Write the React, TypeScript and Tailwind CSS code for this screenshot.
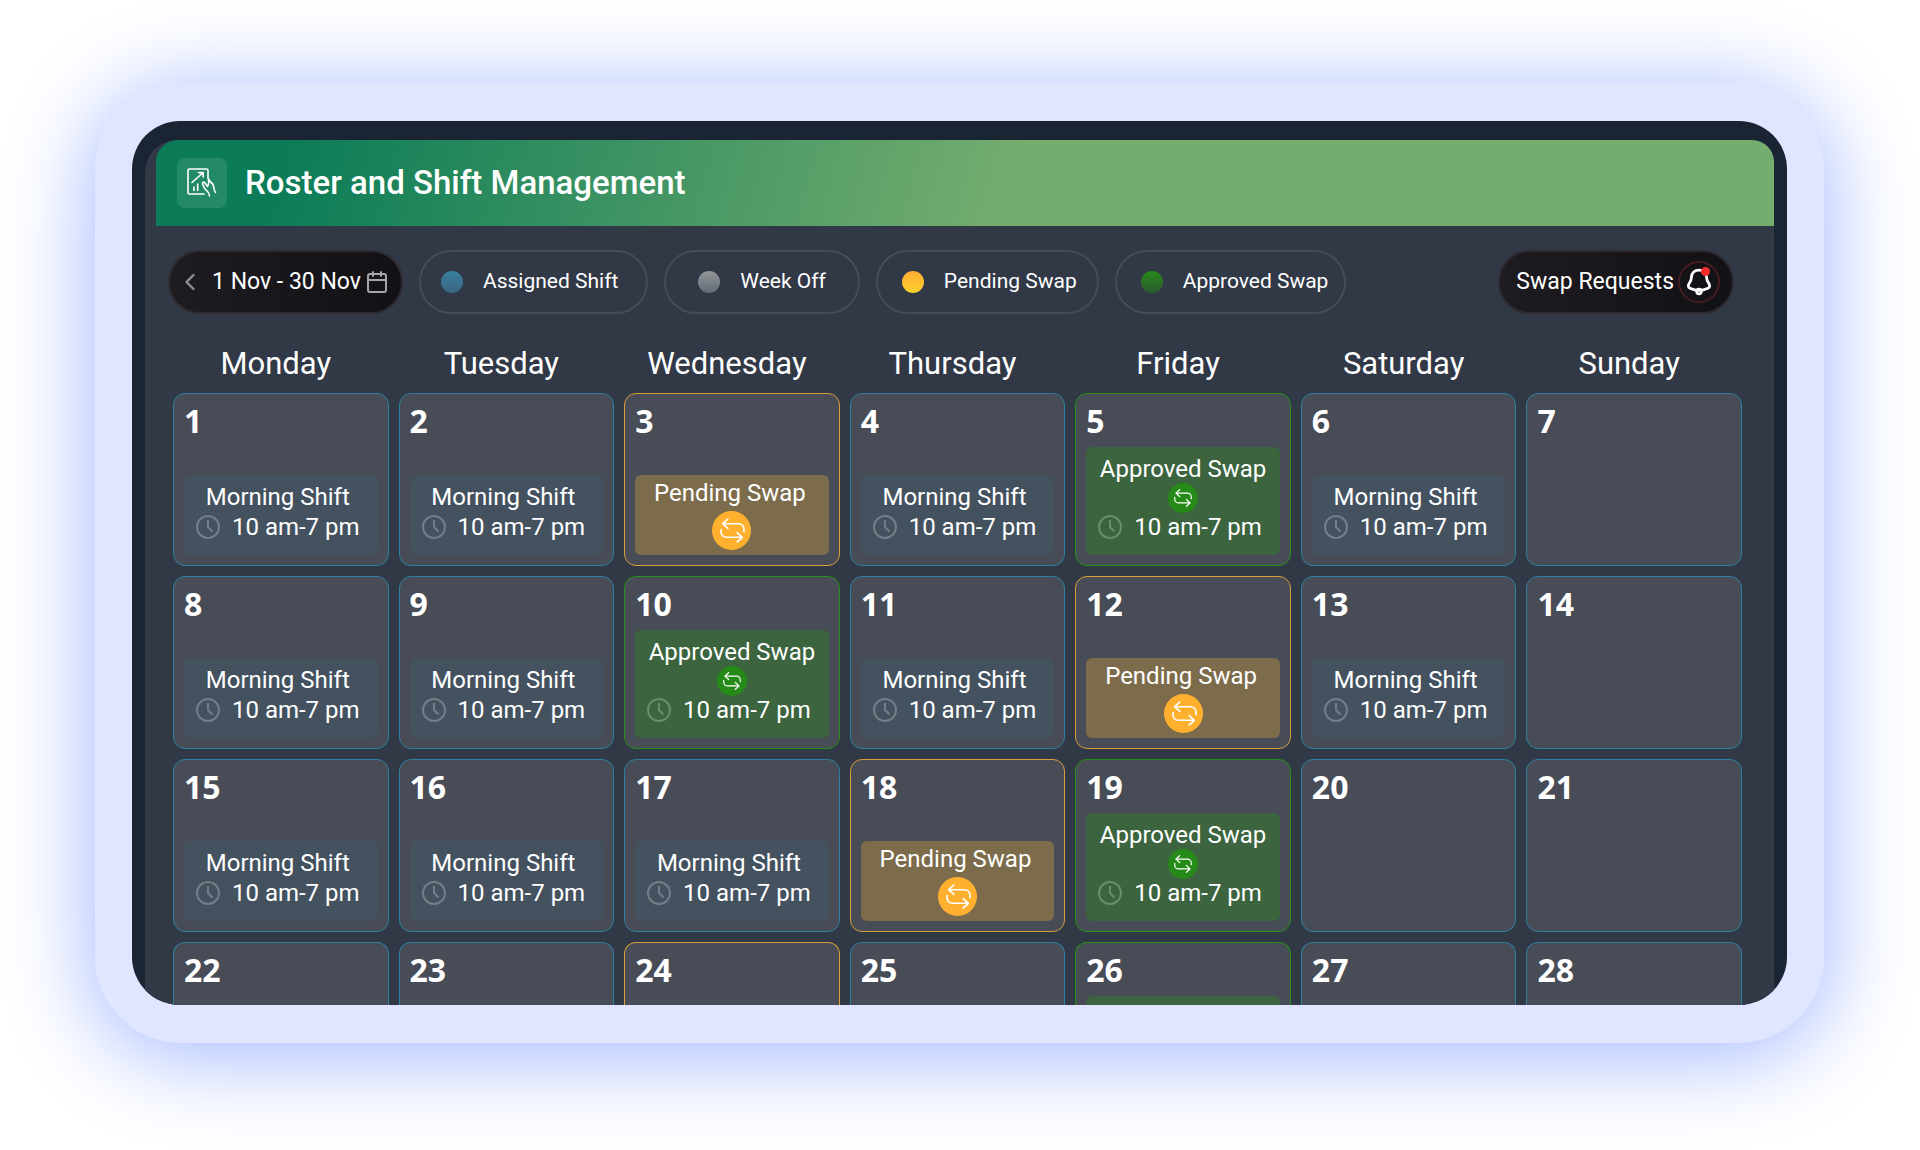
import React from "react";
import { Calendar, ChevronLeft } from "lucide-react";

type Kind = "morning" | "pending" | "approved" | "empty";

const DAYS = [
  "Monday",
  "Tuesday",
  "Wednesday",
  "Thursday",
  "Friday",
  "Saturday",
  "Sunday",
];

const WEEKS: Kind[][] = [
  ["morning", "morning", "pending", "morning", "approved", "morning", "empty"],
  ["morning", "morning", "approved", "morning", "pending", "morning", "empty"],
  ["morning", "morning", "morning", "pending", "approved", "empty", "empty"],
];

// Last visible week, cut by the bottom of the screen
const LAST_WEEK: Kind[] = ["empty", "empty", "pending", "empty", "approved", "empty", "empty"];

const LEGEND = [
  { label: "Assigned Shift", dot: "from-[#38809f] to-[#3a6581]", pad: "pl-5 pr-7" },
  { label: "Week Off", dot: "from-[#939699] to-[#626b77]", pad: "pl-8 pr-8" },
  { label: "Pending Swap", dot: "from-[#ffad33] to-[#fbd02c]", pad: "pl-6 pr-5" },
  { label: "Approved Swap", dot: "from-[#278b18] to-[#2a5a2e]", pad: "pl-6 pr-4" },
];

const BORDERS: Record<Kind, string> = {
  morning: "border-[#2f7fa2]",
  empty: "border-[#2f7fa2]",
  pending: "border-[#d99f3a]",
  approved: "border-[#259015]",
};

function SwapIcon({ className }: { className: string }) {
  return (
    <svg viewBox="0 0 24 24" className={className} fill="none" stroke="white" strokeWidth="1.6" strokeLinecap="round" strokeLinejoin="round">
      <path d="M7.5 1 2.5 5.5l5 4.5M2.5 5.5H18a5 5 0 0 1 5 5V13" />
      <path d="M1 11v2.5a5 5 0 0 0 5 5h15.5M16.5 14l5 4.5-5 4.5" />
    </svg>
  );
}

function RosterIcon() {
  return (
    <svg viewBox="0 0 30 30" className="size-[30px]" fill="none" stroke="white" strokeWidth="1.6" strokeLinecap="round" strokeLinejoin="round">
      <path d="M21 10V2.5A1.5 1.5 0 0 0 19.5 1h-17A1.5 1.5 0 0 0 1 2.5v22A1.5 1.5 0 0 0 2.5 26H17" />
      <path d="M5 14.5 15.7 5M11.5 4.6h4.7V9" />
      <path d="M7 19v3.5M10.7 16v6.5" />
      <path d="M21 10.5c1.5 1 1.5 2.5 2.5 3.5 2 1.2 3 2.5 3.2 5 .2 2.5.3 3.5 1.8 5.5" />
      <path d="M22.5 28c0-2-.5-3-2-4.500-2.500-2-4-4.500-5-7.500-.5-2 1.500-2.500 2.500-1l2.500 3.500c1.200-1.500 1.500-3.500 1-6" />
    </svg>
  );
}

function BellIcon() {
  return (
    <svg viewBox="0 0 26 28" className="h-[28px] w-[26px]" fill="none" stroke="white" strokeWidth="2.8" strokeLinecap="round" strokeLinejoin="round">
      <path d="M13 2.2C8.5 2.2 5.8 5 5.5 9c-.2 3-.5 4-2 5.800C1.500 17.300 2 19.500 4.500 20.500c5 2.300 12 2.300 17 0 2.500-1 3-3.200 1-5.700-1.500-1.800-1.800-2.800-2-5.800C20.200 5 17.500 2.200 13 2.200Z" />
      <circle cx="13" cy="23.5" r="2.3" />
    </svg>
  );
}

function ShiftTime() {
  return (
    <div className="flex items-center justify-center gap-3 pr-1.5">
      <svg viewBox="0 0 24 24" className="size-6 stroke-white/25" fill="none" strokeWidth="2">
        <circle cx="12" cy="12" r="11" />
        <path d="M12 5v7l4.5 4.5" />
      </svg>
      <span>10 am-7 pm</span>
    </div>
  );
}

function ShiftBlock({ kind }: { kind: Kind }) {
  if (kind === "morning") {
    return (
      <div className="h-20 rounded-md bg-[#44525f] pt-[7px]">
        <div className="pr-1.5">Morning Shift</div>
        <ShiftTime />
      </div>
    );
  }
  if (kind === "pending") {
    return (
      <div className="flex h-20 flex-col items-center rounded-md bg-[#7d6c4b] pt-[3px]">
        <div className="pr-1">Pending Swap</div>
        <div className="mt-[3px] flex size-[39px] items-center justify-center rounded-full bg-[#ffb02f] pl-0.5">
          <SwapIcon className="size-[25px]" />
        </div>
      </div>
    );
  }
  if (kind === "approved") {
    return (
      <div className="flex h-[108px] flex-col items-center rounded-md bg-[#3b643f] pt-[7px]">
        <div>Approved Swap</div>
        <div className="-my-px flex size-[30px] items-center justify-center rounded-full bg-[#268a18]">
          <SwapIcon className="size-[18px]" />
        </div>
        <ShiftTime />
      </div>
    );
  }
  return null;
}

function DayNumber({ day }: { day: number }) {
  return (
    <div className="h-0 text-left font-['Open_Sans',sans-serif] text-[32px] leading-10 font-bold">
      {day}
    </div>
  );
}

export default function App() {
  return (
    <div className="min-h-screen bg-white pt-[83px] pr-24 pb-[107px] pl-[95px] font-[Roboto,sans-serif] text-white">
      <div className="rounded-[86px] bg-[#e0e6ff] px-[37px] py-[38px] shadow-[0_10px_90px_2px_#a0b6ff]">
        <div className="overflow-hidden rounded-[48px] bg-[#1b2433] pt-[19px] pr-[13px] pl-[13px]">
          <main className="rounded-tl-[32px] rounded-tr-[22px] bg-[#313846] pl-[11px]">
            {/* Header */}
            <header className="flex h-[86px] items-center gap-[18px] rounded-t-[22px] bg-[linear-gradient(105deg,#0b7c57_8%,#75ad6f_53%)] pl-[21px]">
              <div className="flex size-[50px] items-center justify-center rounded-lg bg-white/10">
                <RosterIcon />
              </div>
              <h1 className="text-[33px] font-medium">Roster and Shift Management</h1>
            </header>

            {/* Filters */}
            <div className="flex items-center gap-4 pt-6 pr-10 pl-3">
              <button className="flex h-16 items-center rounded-full border-2 border-[#2e2a30] bg-linear-to-r from-[#1e1c20] to-[#121116] pr-3 pl-1.5 text-[23px]">
                <ChevronLeft className="size-7 text-[#8b9196]" strokeWidth={2} />
                <span className="mr-1 ml-2">1 Nov - 30 Nov</span>
                <Calendar className="size-6 text-[#a3a7aa]" strokeWidth={2} />
              </button>
              {LEGEND.map((item) => (
                <button
                  key={item.label}
                  className={`flex h-16 items-center gap-5 rounded-full border-2 border-[#464c59] text-[21px] ${item.pad}`}
                >
                  <span className={`size-[22px] rounded-full bg-linear-to-b ${item.dot}`} />
                  {item.label}
                </button>
              ))}
              <button className="ml-auto flex h-16 items-center gap-1 rounded-full border-2 border-[#2e2a30] bg-linear-to-r from-[#1e1c20] to-[#121116] pr-3 pl-4 text-[23px]">
                Swap Requests
                <span className="relative flex size-[42px] items-center justify-center rounded-full border-2 border-[#471c20]">
                  <BellIcon />
                  <span className="absolute top-1 right-2 size-[9px] rounded-full bg-[#fb2b2f]" />
                </span>
              </button>
            </div>

            {/* Calendar */}
            <table className="block pt-[30px] pr-8 pl-[17px] text-center">
              <thead className="block">
                <tr className="grid grid-cols-7 gap-[10px] pb-[9px]">
                  {DAYS.map((day) => (
                    <th key={day} scope="col" className="pr-2.5 text-[31px] leading-10 font-normal">
                      {day}
                    </th>
                  ))}
                </tr>
              </thead>
              <tbody className="block">
                {WEEKS.map((week, w) => (
                  <tr key={w} className="mb-[10px] grid grid-cols-7 gap-[10px]">
                    {week.map((kind, d) => (
                      <td
                        key={d}
                        className={`flex h-[173px] flex-col justify-between rounded-xl border bg-[#474c57] px-[10px] pt-[7px] pb-[10px] text-2xl leading-[30px] ${BORDERS[kind]}`}
                      >
                        <DayNumber day={w * 7 + d + 1} />
                        <ShiftBlock kind={kind} />
                      </td>
                    ))}
                  </tr>
                ))}
                <tr className="grid grid-cols-7 gap-[10px]">
                  {LAST_WEEK.map((kind, d) => (
                    <td
                      key={d}
                      className={`flex h-[63px] flex-col justify-between rounded-t-xl border border-b-0 bg-[#474c57] px-[10px] pt-[7px] ${BORDERS[kind]}`}
                    >
                      <DayNumber day={22 + d} />
                      {kind === "approved" && <div className="h-[9px] rounded-t-md bg-[#3b643f]" />}
                    </td>
                  ))}
                </tr>
              </tbody>
            </table>
          </main>
        </div>
      </div>
    </div>
  );
}
